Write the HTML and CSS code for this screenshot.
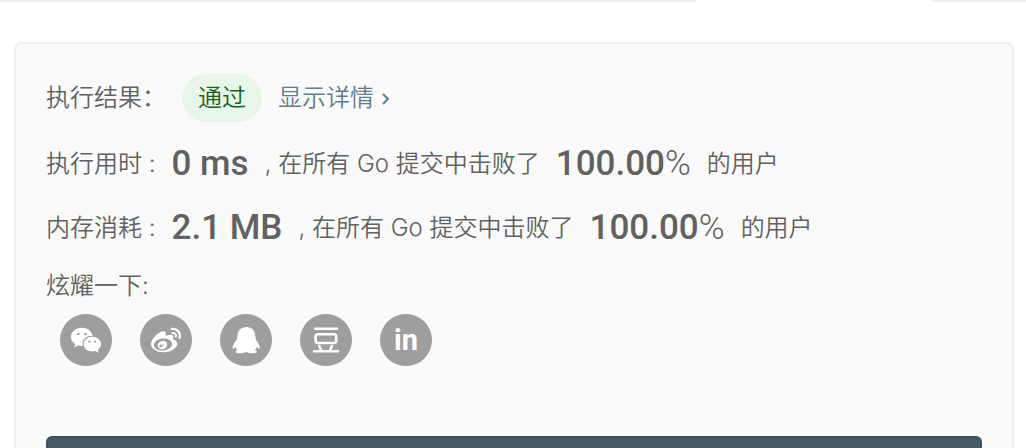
FILE: index.html
```html
<!DOCTYPE html>
<html lang="zh-CN">
<head>
  <meta charset="utf-8">
  <title>执行结果</title>
  <link rel="stylesheet" href="styles.css">
</head>
<body>
  <div class="tab-line">
    <span class="line"></span>
    <span class="line-end"></span>
  </div>
  <main class="result">
    <div class="status">
      <span>执行结果：</span>
      <span class="badge">通过</span>
      <a class="detail" href="#detail">显示详情
        <svg width="8" height="14" viewBox="0 0 8 14"><path d="M1 3l5 5-5 5" fill="none" stroke="currentColor" stroke-width="2"/></svg>
      </a>
    </div>
    <div class="stat">
      <span>执行用时 :</span>
      <strong>0 ms</strong>
      <span>, 在所有 Go 提交中击败了</span>
      <strong>100.00<span class="percent">%</span></strong>
      <span>的用户</span>
    </div>
    <div class="stat">
      <span>内存消耗 :</span>
      <strong>2.1 MB</strong>
      <span>, 在所有 Go 提交中击败了</span>
      <strong>100.00<span class="percent">%</span></strong>
      <span>的用户</span>
    </div>
    <div class="share-title">炫耀一下:</div>
    <div class="share">
      <a href="#wechat" aria-label="微信">
        <svg width="30" height="30" viewBox="0 0 24 24"><path d="M8.691 2.188C3.891 2.188 0 5.476 0 9.53c0 2.212 1.17 4.203 3.002 5.55a.59.59 0 0 1 .213.665l-.39 1.48c-.019.07-.048.141-.048.213 0 .163.13.295.29.295a.326.326 0 0 0 .167-.054l1.903-1.114a.864.864 0 0 1 .717-.098 10.16 10.16 0 0 0 2.837.403c.276 0 .543-.027.811-.05-.857-2.578.157-4.972 1.932-6.446 1.703-1.415 3.882-1.98 5.853-1.838-.576-3.583-4.196-6.348-8.596-6.348zM5.785 6.100a1.050 1.050 0 1 1 0 2.100 1.050 1.050 0 0 1 0-2.100zM11.598 6.100a1.050 1.050 0 1 1 0 2.100 1.050 1.050 0 0 1 0-2.100z"/><path fill-rule="evenodd" d="M17 9.300C13 9.300 10.100 11.900 10.100 15.200s2.900 5.900 6.900 5.900c.8 0 1.600-.1 2.300-.3l2.200 1.200c.3.100.5-.1.4-.4l-.5-1.600C23 18.800 24 17.200 24 15.200c0-3.300-3-5.900-7-5.900zM14.700 12.300a.9.900 0 1 1 0 1.800.9.900 0 0 1 0-1.800zM19.300 12.300a.9.900 0 1 1 0 1.800.9.900 0 0 1 0-1.800z"/></svg>
      </a>
      <a href="#weibo" aria-label="微博">
        <svg width="30" height="30" viewBox="0 0 24 24"><path d="M10.098 20.323c-3.977.391-7.414-1.406-7.672-4.02-.259-2.609 2.759-5.047 6.74-5.441 3.979-.394 7.413 1.404 7.671 4.018.259 2.6-2.759 5.049-6.737 5.439l-.002.004zM9.05 17.219c-.384.616-1.208.884-1.829.602-.612-.279-.793-.991-.406-1.593.379-.595 1.176-.861 1.793-.601.622.263.82.972.442 1.592zm1.27-1.627c-.141.237-.449.353-.689.253-.236-.09-.313-.361-.177-.586.138-.227.436-.346.672-.24.239.09.315.36.18.601l.014-.028zm.176-2.719c-1.893-.493-4.033.45-4.857 2.118-.836 1.704-.026 3.591 1.886 4.21 1.983.64 4.318-.341 5.132-2.179.8-1.793-.201-3.642-2.161-4.149zm7.563-1.224c-.346-.105-.57-.18-.405-.615.375-.977.42-1.804 0-2.404-.781-1.112-2.915-1.053-5.364-.03 0 0-.766.331-.571-.271.376-1.217.315-2.224-.27-2.809-1.338-1.337-4.869.045-7.888 3.08C1.309 10.87 0 13.273 0 15.348c0 3.981 5.099 6.395 10.086 6.395 6.536 0 10.888-3.801 10.888-6.82 0-1.822-1.547-2.854-2.915-3.284v.01zm1.908-5.092c-.766-.856-1.908-1.187-2.96-.962-.436.09-.706.511-.616.932.09.42.511.691.932.602.511-.105 1.067.044 1.442.465.376.421.466.977.316 1.473-.136.406.089.856.51.992.405.119.857-.105.992-.512.33-1.021.12-2.178-.646-3.035l.03.045zm2.418-2.195c-1.576-1.757-3.905-2.419-6.054-1.968-.496.104-.812.587-.706 1.081.104.496.586.813 1.082.707 1.532-.331 3.185.15 4.296 1.383 1.112 1.246 1.429 2.943.947 4.416-.165.48.106 1.007.586 1.157.479.165.991-.104 1.157-.586.675-2.088.241-4.478-1.338-6.235l.03.045z"/></svg>
      </a>
      <a href="#qq" aria-label="QQ">
        <svg width="52" height="52" viewBox="0 0 52 52"><path d="M26.500 13c-5.500 0-9 3.800-9 8.500 0 1-.6 1.500-.6 2.500 0 .6.200 1-.2 1.700-2.600 3-4.500 6.300-4 8.500.2 1.200 1.600.2 2.800-1.500.3 1.500 1 2.700 2 3.500-1.800.3-2.200 1.500-1.600 2.200.9 1.200 7.600 1 9.200-.2h2.200c1.600 1.200 8.300 1.400 9.200.2.600-.7.100-1.900-1.700-2.200 1-.8 1.700-2 2-3.500 1.200 1.700 2.500 2.700 2.800 1.500.5-2.200-1.400-5.500-3.800-8.500-.3-.7-.1-1.100-.1-1.700 0-1-.6-1.500-.6-2.500 0-4.700-3.300-8.500-8.600-8.500z"/></svg>
      </a>
      <a href="#douban" aria-label="豆瓣">
        <svg width="52" height="52" viewBox="0 0 52 52"><g fill="none" stroke="#fff" stroke-width="2.600" stroke-linecap="round"><path d="M15.300 14.700H37M14 37.300h24M19.300 32l2 4.500M32 32l-2 4.500"/><rect x="15.600" y="20.300" width="20.600" height="8.700" rx="2.500"/></g></svg>
      </a>
      <a class="linkedin" href="#linkedin" aria-label="LinkedIn">in</a>
    </div>
    <div class="banner"></div>
  </main>
</body>
</html>
```

FILE: styles.css
```css
* {
  box-sizing: border-box;
}
body {
  margin: 0;
  background-color: #fff;
  color: #616161;
  font-family: Inter, "Noto Sans CJK SC", sans-serif;
  font-size: 24px;
  font-weight: 350;
  line-height: 48px;
}
a {
  text-decoration: none;
}
.tab-line {
  display: flex;
  justify-content: space-between;
  gap: 236px;
  height: 2px;
}
.line {
  flex: 1;
  background-color: #eee;
}
.line-end {
  width: 94px;
  background-color: #eee;
}
.result {
  margin: 40px 12px 0 14px;
  padding: 30px 30px 0;
  border: 2px solid #eee;
  border-bottom: none;
  border-radius: 8px 8px 0 0;
  background-color: #fafafa;
}
.status {
  display: flex;
  gap: 16px;
  margin-bottom: 10px;
}
.badge {
  padding: 0 16px;
  border-radius: 24px;
  background-color: #e8f5e9;
  color: #1b5e20;
}
.detail {
  display: flex;
  align-items: center;
  gap: 8px;
  color: #607d8b;
}
.stat {
  display: flex;
  align-items: center;
  gap: 16px;
  height: 64px;
  line-height: 64px;
  white-space: nowrap;
}
.stat strong {
  font-family: Roboto, sans-serif;
  font-size: 35px;
  font-weight: 500;
}
.stat .percent {
  font-weight: 300;
}
.share-title {
  margin: 2px 0 4px;
}
.share {
  display: flex;
  gap: 28px;
  padding: 0 14px;
}
.share a {
  display: flex;
  align-items: center;
  justify-content: center;
  width: 52px;
  height: 52px;
  border-radius: 50%;
  background-color: #9e9e9e;
  color: #fff;
}
.share svg {
  fill: #fff;
}
.share .linkedin {
  font-family: Roboto, sans-serif;
  font-size: 29px;
  font-weight: 700;
}
.banner {
  height: 12px;
  margin-top: 70px;
  border: 2px solid #3f525c;
  border-bottom: none;
  border-radius: 6px 6px 0 0;
  background-color: #455a64;
}
```
